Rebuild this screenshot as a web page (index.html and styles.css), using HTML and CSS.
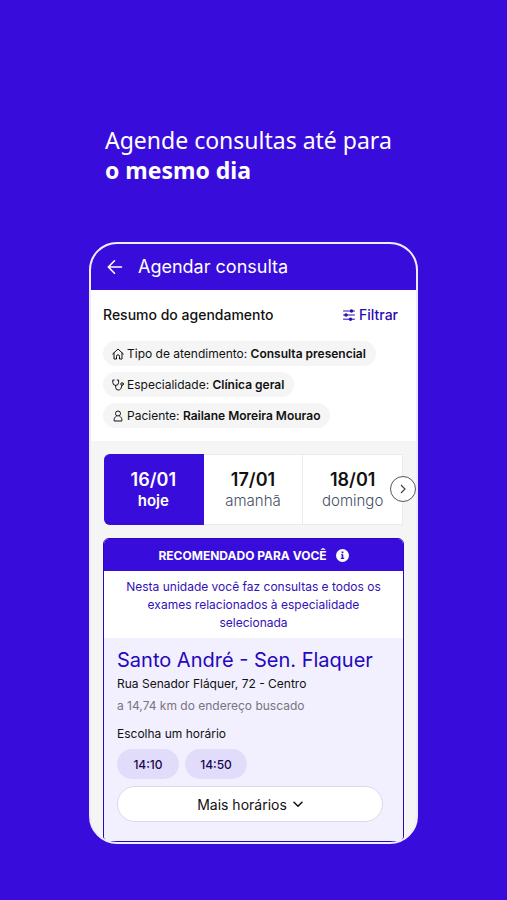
FILE: index.html
```html
<!DOCTYPE html>
<html lang="pt-BR">
<head>
<meta charset="utf-8">
<meta name="viewport" content="width=device-width, initial-scale=1">
<title>Agendar consulta</title>
<link rel="stylesheet" href="styles.css">
</head>
<body>
<h1 class="headline">Agende consultas até para <strong>o mesmo dia</strong></h1>
<main class="phone">
  <header class="topbar">
    <button class="back" type="button" aria-label="Voltar">
      <svg width="16" height="16" viewBox="0 0 16 16" fill="none" stroke="currentColor" stroke-width="1.6" stroke-linecap="round" stroke-linejoin="round"><path d="M14.500 8H1.5M7.5 1.8 1.3 8l6.2 6.2"/></svg>
    </button>
    <h2 class="topbar-title">Agendar consulta</h2>
  </header>
  <section class="summary">
    <div class="summary-head">
      <h3 class="summary-title">Resumo do agendamento</h3>
      <button class="filter" type="button">
        <svg width="12" height="12" viewBox="0 0 12 12" fill="none" stroke="currentColor" stroke-linecap="round"><path d="M.5 2h11M.5 6h11M.5 10.200h11"/><g fill="currentColor" stroke="none"><circle cx="8.500" cy="2" r="1.700"/><circle cx="3" cy="6" r="1.700"/><circle cx="7.500" cy="10.200" r="1.700"/></g></svg>
        Filtrar
      </button>
    </div>
    <ul class="chips">
      <li class="chip">
        <svg width="12" height="12" viewBox="0 0 12 12" fill="none" stroke="currentColor" stroke-linejoin="round" stroke-linecap="round"><path d="M.7 6 6 1l5.300 5M2 5v6h2.500V8.300a1.500 1.500 0 0 1 3 0V11H10V5"/></svg>
        <span>Tipo de atendimento: <b>Consulta presencial</b></span>
      </li>
      <li class="chip">
        <svg width="12" height="12" viewBox="0 0 12 12" fill="none" stroke="currentColor" stroke-linejoin="round" stroke-linecap="round"><path d="M2.200 1H.8v2.500a2.900 2.900 0 0 0 5.800 0V1H5.200M3.700 6.500v2a2.500 2.500 0 0 0 2.500 2.500c2 0 3-1.200 3.200-3l.6-1.600"/><circle cx="10.100" cy="5" r="1.300"/></svg>
        <span>Especialidade: <b>Clínica geral</b></span>
      </li>
      <li class="chip">
        <svg width="12" height="12" viewBox="0 0 12 12" fill="none" stroke="currentColor" stroke-linejoin="round"><circle cx="6" cy="3.500" r="2.500"/><path d="M4.500 6.300C3 6.800 2.200 8 2.200 9.500V11h7.600V9.500c0-1.500-.8-2.700-2.300-3.200"/></svg>
        <span>Paciente: <b>Railane Moreira Mourao</b></span>
      </li>
    </ul>
  </section>
  <section class="schedule">
    <div class="days">
      <button class="day day-active" type="button"><b>16/01</b><span>hoje</span></button>
      <button class="day" type="button"><b>17/01</b><span>amanhã</span></button>
      <button class="day" type="button"><b>18/01</b><span>domingo</span></button>
      <button class="next" type="button" aria-label="Próximos dias">
        <svg width="6" height="10" viewBox="0 0 6 10" fill="none" stroke="currentColor" stroke-width="1.200"><path d="m1 1 4 4-4 4"/></svg>
      </button>
    </div>
    <article class="card">
      <h3 class="card-banner">RECOMENDADO PARA VOCÊ
        <svg width="13" height="13" viewBox="0 0 13 13"><circle cx="6.500" cy="6.500" r="6.500" fill="#fff"/><path d="M5 5.200h2.300v3.600h.9v1.100H4.800V8.800h.9V6.300H5zM5.600 2.500h1.800v1.700H5.600z" fill="#380ddc"/></svg>
      </h3>
      <p class="card-note">Nesta unidade você faz consultas e todos os exames relacionados à especialidade selecionada</p>
      <div class="unit">
        <h4 class="unit-name">Santo André - Sen. Flaquer</h4>
        <p class="unit-address">Rua Senador Fláquer, 72 - Centro</p>
        <p class="unit-distance">a 14,74 km do endereço buscado</p>
        <p class="unit-pick">Escolha um horário</p>
        <div class="times">
          <button class="time" type="button">14:10</button>
          <button class="time" type="button">14:50</button>
        </div>
        <button class="more" type="button">Mais horários
          <svg width="10" height="7" viewBox="0 0 10 7" fill="none" stroke="currentColor" stroke-width="1.500" stroke-linecap="round" stroke-linejoin="round"><path d="m1 1.200 4 4 4-4"/></svg>
        </button>
      </div>
    </article>
  </section>
</main>
</body>
</html>
```
FILE: styles.css
```css
* {
  box-sizing: border-box;
}

body {
  margin: 0;
  padding: 125px 89px 56px;
  background: #380ddc;
  font-family: Inter, "Liberation Sans", sans-serif;
  font-optical-sizing: none;
  color: #111;
}

h1, h2, h3, h4, p, ul {
  margin: 0;
  padding: 0;
}

button {
  margin: 0;
  padding: 0;
  border: 0;
  background: none;
  font: inherit;
  font-optical-sizing: none;
  color: inherit;
  cursor: pointer;
}

svg {
  flex: none;
}

.headline {
  padding-left: 16px;
  color: #fff;
  font-family: "Noto Sans", sans-serif;
  font-size: 23px;
  font-weight: 400;
  line-height: 30px;
}

.headline strong {
  display: block;
  font-weight: 700;
}

.phone {
  margin-top: 57px;
  border: 2px solid #f0ecff;
  border-radius: 28px;
  overflow: hidden;
  background: #f5f5f6;
}

.topbar {
  display: flex;
  align-items: center;
  gap: 15px;
  height: 46px;
  padding: 0 16px;
  background: #380ddc;
  color: #fff;
}

.back {
  display: flex;
}

.topbar-title {
  padding-bottom: 2px;
  font-size: 18px;
  font-weight: 400;
}

.summary {
  padding: 15px 12px 13px;
  background: #fff;
}

.summary-head {
  display: flex;
  align-items: center;
  justify-content: space-between;
  padding-right: 6px;
  line-height: 20px;
}

.summary-title {
  font-size: 14px;
  font-weight: 500;
}

.filter {
  display: flex;
  align-items: center;
  gap: 4px;
  color: #2a0bb4;
  font-size: 14px;
  font-weight: 500;
}

.chips {
  display: flex;
  flex-direction: column;
  align-items: flex-start;
  gap: 6px;
  margin-top: 16px;
  list-style: none;
}

.chip {
  display: flex;
  align-items: center;
  gap: 3px;
  height: 25px;
  padding: 0 10px 0 9px;
  border-radius: 13px;
  background: #f5f5f6;
  font-size: 12px;
  white-space: nowrap;
}

.chip b {
  font-weight: 600;
}

.schedule {
  padding: 13px 12px 0;
}

.days {
  position: relative;
  display: grid;
  grid-template-columns: repeat(3, 1fr);
  margin: 0 1px;
}

.day {
  display: flex;
  flex-direction: column;
  align-items: center;
  justify-content: center;
  height: 71px;
  border: 1px solid #ebebed;
  border-left-width: 0;
  background: #fff;
  color: #445064;
  font-size: 15px;
  font-weight: 300;
  line-height: 20px;
}

.day b {
  color: #111;
  font-size: 18px;
  font-weight: 600;
  line-height: 22px;
}

.day-active {
  border-color: #380ddc;
  border-radius: 6px 0 0 6px;
  background: #380ddc;
  color: #fff;
  font-weight: 600;
}

.day-active b {
  color: #fff;
}

.next {
  position: absolute;
  top: 22px;
  right: -13px;
  display: flex;
  align-items: center;
  justify-content: center;
  width: 26px;
  height: 26px;
  border: 1px solid #55555c;
  border-radius: 50%;
  background: #fff;
  color: #444;
}

.card {
  margin-top: 13px;
  border: 1px solid #2609b8;
  border-radius: 6px;
  overflow: hidden;
  background: #fff;
}

.card-banner {
  display: flex;
  align-items: center;
  justify-content: center;
  gap: 9px;
  height: 32px;
  background: #380ddc;
  color: #fff;
  font-size: 12px;
  font-weight: 700;
}

.card-note {
  padding: 7px 16px 6px;
  color: #3311b8;
  font-size: 12px;
  line-height: 18px;
  text-align: center;
}

.unit {
  padding: 9px 20px 19px 13px;
  background: #f2effe;
}

.unit-name {
  color: #2408bb;
  font-size: 20px;
  font-weight: 400;
  line-height: 26px;
  white-space: nowrap;
}

.unit-address,
.unit-distance,
.unit-pick {
  font-size: 12px;
  line-height: 22px;
}

.unit-distance {
  color: #77757f;
}

.unit-pick {
  margin-top: 6px;
}

.times {
  display: flex;
  gap: 6px;
  margin-top: 4px;
}

.time {
  width: 62px;
  height: 30px;
  border-radius: 15px;
  background: #e1dcfa;
  color: #16084f;
  font-size: 12px;
  font-weight: 500;
}

.more {
  display: flex;
  align-items: center;
  justify-content: center;
  gap: 6px;
  width: 100%;
  height: 36px;
  margin-top: 7px;
  border: 1px solid #dcd9e4;
  border-radius: 18px;
  background: #fff;
  font-size: 14px;
}
```
